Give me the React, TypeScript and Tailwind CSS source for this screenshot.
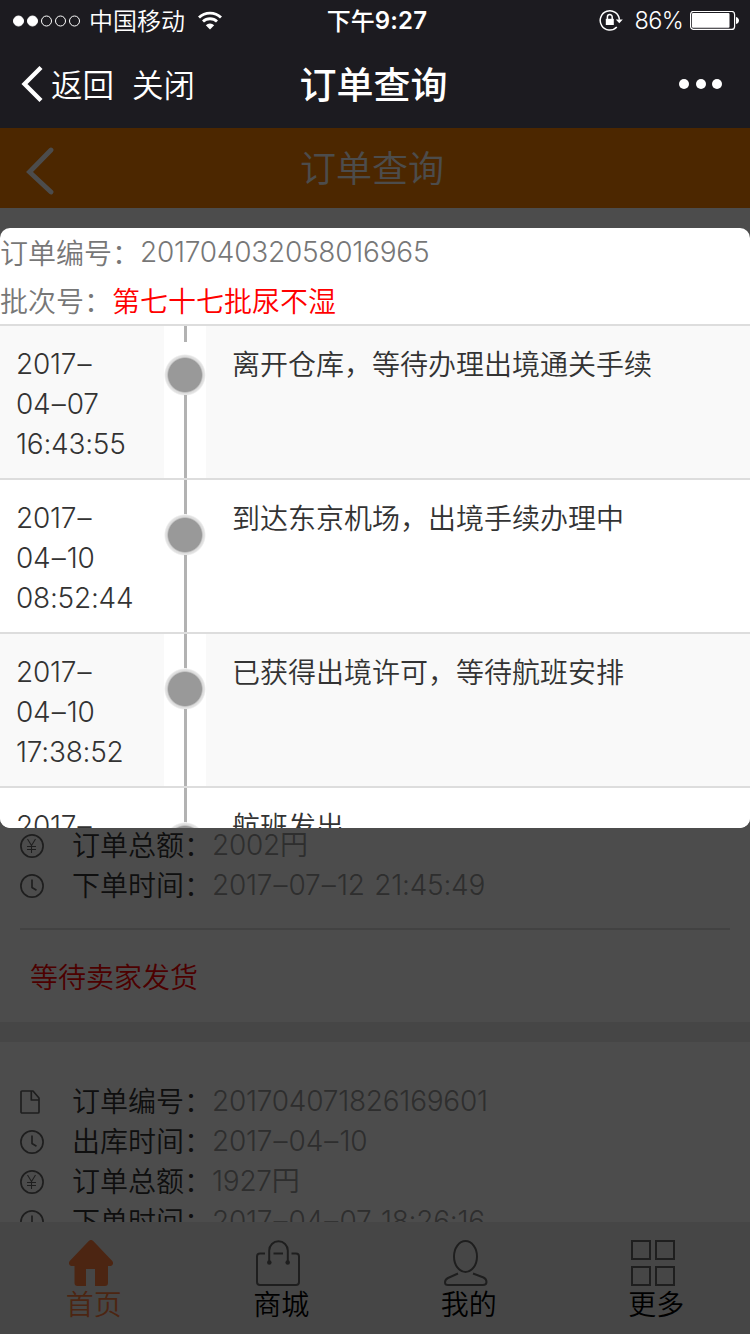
import { ReactNode } from 'react';
import clsx from 'clsx';

type IconName = 'file' | 'clock' | 'yen';

interface TrackEvent {
  date: string[];
  text: string;
}

interface OrderField {
  icon: IconName;
  label: string;
  value: string;
  unit?: string;
}

const trackEvents: TrackEvent[] = [
  { date: ['2017–', '04–07', '16:43:55'], text: '离开仓库，等待办理出境通关手续' },
  { date: ['2017–', '04–10', '08:52:44'], text: '到达东京机场，出境手续办理中' },
  { date: ['2017–', '04–10', '17:38:52'], text: '已获得出境许可，等待航班安排' },
  { date: ['2017–'], text: '航班发出' },
];

const firstOrder: OrderField[] = [
  { icon: 'yen', label: '订单总额：', value: '2002', unit: '円' },
  { icon: 'clock', label: '下单时间：', value: '2017–07–12 21:45:49' },
];

const secondOrder: OrderField[] = [
  { icon: 'file', label: '订单编号：', value: '201704071826169601' },
  { icon: 'clock', label: '出库时间：', value: '2017–04–10' },
  { icon: 'yen', label: '订单总额：', value: '1927', unit: '円' },
  { icon: 'clock', label: '下单时间：', value: '2017–04–07 18:26:16' },
];

// Latin digits, slightly tightened, with a little air around the dashes
function Num({ text, className }: { text: string; className?: string }) {
  return (
    <span className={clsx('font-[Inter,sans-serif] whitespace-pre [word-spacing:2px]', className ?? 'tracking-[-0.24px]')}>
      {text.split(/(–)/).map((part, index) =>
        part === '–' ? (
          <span key={index} className="px-[1.3px]">
            –
          </span>
        ) : (
          part
        )
      )}
    </span>
  );
}

function FieldIcon({ name }: { name: IconName }) {
  return (
    <svg className="h-6 w-6" viewBox="0 0 24 24" fill="none" stroke="#666" strokeWidth="1.7" strokeLinejoin="round">
      {name === 'file' && (
        <>
          <path d="M2 1h11l6 7v14a1 1 0 0 1-1 1H2a1 1 0 0 1-1-1V2a1 1 0 0 1 1-1z" />
          <path d="M11.3 1v9H19" />
        </>
      )}
      {name === 'clock' && (
        <>
          <circle cx="12" cy="12" r="11.1" />
          <path d="M12 5.500v8l4.500 2.800" />
        </>
      )}
      {name === 'yen' && (
        <>
          <circle cx="12" cy="12" r="11.1" />
          <path strokeWidth="1.1" d="M7.500 5l4 6.500 4-6.500M11.500 11.500V19M7 12.500h9M7 15.500h9" />
        </>
      )}
    </svg>
  );
}

function StatusBar() {
  return (
    <div className="flex h-10 items-center pr-[11px] pl-[13px]">
      <div className="flex flex-1 items-center">
        <svg className="mt-px h-3 w-[68px]" viewBox="0 0 68 12" fill="none" stroke="#fff">
          <circle cx="5.500" cy="6" r="5" fill="#fff" />
          <circle cx="19.500" cy="6" r="5" fill="#fff" />
          <circle cx="33.500" cy="6" r="5" />
          <circle cx="47.500" cy="6" r="5" />
          <circle cx="61.500" cy="6" r="5" />
        </svg>
        <span className="ml-2 text-[24px] leading-none">中国移动</span>
        <svg className="ml-[13px] h-[19px] w-6" viewBox="0 0 24 19" fill="none" stroke="#fff" strokeWidth="2.800">
          <path d="M1 6.600a15.600 15.600 0 0 1 22 0" />
          <path d="M5 10.600a10 10 0 0 1 14 0" />
          <path d="M12 18.600l-4.200-4.300a6 6 0 0 1 8.400 0z" fill="#fff" stroke="none" />
        </svg>
      </div>
      <div className="ml-[2px] flex items-center text-[24px] leading-none font-medium">
        下午
        <Num text="9:27" className="pt-px font-semibold tracking-[0.2px]" />
      </div>
      <div className="flex flex-1 items-center justify-end pt-[2px]">
        <svg className="mr-3 h-6 w-6" viewBox="0 0 24 24" fill="none" stroke="#fff" strokeWidth="1.500">
          <path d="M17.800 18a9.600 9.600 0 1 1 2.600-7.200" />
          <path d="M16.800 10.400h7l-3.500 3.800z" fill="#fff" stroke="none" />
          <rect x="6.800" y="9.800" width="8" height="6.200" fill="#fff" stroke="none" />
          <path d="M8.400 10V8a2.400 2.400 0 0 1 4.800 0v2" />
        </svg>
        <Num text="86%" className="text-[23.500px] leading-none tracking-[-0.7px]" />
        <svg className="ml-[7px] h-5 w-[49px]" viewBox="0 0 49 20" fill="none">
          <rect x="0.600" y="0.400" width="44" height="18" rx="3" stroke="#fff" strokeWidth="1.200" />
          <rect x="2" y="2" width="37.500" height="14.800" rx="1" fill="#fff" />
          <path d="M46 6c4 1 4 6 0 7z" fill="#fff" />
        </svg>
      </div>
    </div>
  );
}

function NavBar() {
  return (
    <div className="flex h-[88px] items-center pr-7 pl-[21px]">
      <div className="flex flex-1 items-center text-[31.500px] leading-none">
        <svg className="h-9 w-6" viewBox="0 0 24 36" fill="none" stroke="#fff" strokeWidth="4.300">
          <path d="M20 1.500L3.500 18 20 34.500" />
        </svg>
        <span className="ml-[6px]">返回</span>
        <span className="ml-[18px]">关闭</span>
      </div>
      <div className="ml-1 pb-[2px] text-[37px] leading-none font-medium">订单查询</div>
      <div className="flex flex-1 justify-end gap-[6.500px]">
        <i className="h-[10px] w-[10px] rounded-full bg-white" />
        <i className="h-[10px] w-[10px] rounded-full bg-white" />
        <i className="h-[10px] w-[10px] rounded-full bg-white" />
      </div>
    </div>
  );
}

function FieldRow({ field }: { field: OrderField }) {
  return (
    <div className="flex h-10 items-center pb-[2px] pl-5">
      <span className="mt-1 w-[52px]">
        <FieldIcon name={field.icon} />
      </span>
      <span className="text-[#333]">{field.label}</span>
      <span className="text-[#999]">
        <Num text={field.value} />
        {field.unit}
      </span>
    </div>
  );
}

function TabItem({ label, active, children }: { label: string; active?: boolean; children: ReactNode }) {
  return (
    <div className={clsx('flex flex-1 flex-col items-center pt-[18px]', active ? 'text-[#ff7e3e]' : 'text-black')}>
      <svg
        className={clsx('mr-[6px] h-[46px] w-11', active ? 'text-[#ff7e3e]' : 'text-[#666]')}
        viewBox="0 0 44 46"
        fill="none"
        stroke="currentColor"
        strokeWidth="2"
      >
        {children}
      </svg>
      <span className="mt-[3px] text-[28px] leading-7">{label}</span>
    </div>
  );
}

function TabBar() {
  return (
    <div className="flex h-28 shrink-0 bg-[#ebebeb]">
      <TabItem label="首页" active>
        <path
          d="M19.500 1.200a3.500 3.500 0 0 1 5 0L43.300 21c1.500 1.800.7 5-1.800 5H39v17a3 3 0 0 1-3 3H26V29h-9v17H8.500a3 3 0 0 1-3-3V26H2.500C0 26-.8 22.800.7 21z"
          fill="currentColor"
          stroke="none"
        />
      </TabItem>
      <TabItem label="商城">
        <path d="M9 13.500H4a3 3 0 0 0-3 3V42a3 3 0 0 0 3 3h36a3 3 0 0 0 3-3V16.500a3 3 0 0 0-3-3h-4.500M17.500 13.500H27" />
        <path d="M13.200 22V10.500a9.300 9.300 0 0 1 18.600 0V22" />
        <circle cx="13.300" cy="22.500" r="2.300" fill="currentColor" stroke="none" />
        <circle cx="31.700" cy="22.500" r="2.300" fill="currentColor" stroke="none" />
      </TabItem>
      <TabItem label="我的">
        <ellipse cx="21.500" cy="16.500" rx="11.500" ry="15.500" />
        <path d="M14 33.500L4 38c-2 1-3 2.500-3 4.500S2 45 4 45h35c2 0 3.500-.8 3.500-3s-1-3.500-3-4.500L29 33.500" />
      </TabItem>
      <TabItem label="更多">
        <rect x="1" y="1" width="18" height="18" />
        <rect x="25" y="1" width="18" height="18" />
        <rect x="1" y="27" width="18" height="18" />
        <rect x="25" y="27" width="18" height="18" />
      </TabItem>
    </div>
  );
}

function TrackRow({ event, first, shaded }: { event: TrackEvent; first: boolean; shaded: boolean }) {
  return (
    <div className={clsx('flex h-[154px] border-t-2 border-[#ddd] text-[#333]', shaded ? 'bg-[#f9f9f9]' : 'bg-white')}>
      <div className="w-[164px] py-4 pl-4">
        {event.date.map((part) => (
          <div key={part} className="h-10 leading-[40px]">
            <Num text={part} />
          </div>
        ))}
      </div>
      <div className="flex w-[42px] flex-col items-center bg-white">
        <i className={clsx('w-[3px] shrink-0 bg-[#b2b2b2]', first ? 'mb-[13px] h-4' : 'h-[35px]')} />
        <i className="-my-px h-[42px] w-[42px] shrink-0 rounded-full bg-[radial-gradient(circle,#999_16.500px,#dadada_18px,#e4e4e4_19.500px,#fff_21px)]" />
        <i className="w-[3px] flex-1 bg-[#b2b2b2]" />
      </div>
      <div className="flex-1 pt-4 pl-[26px] leading-[42px]">{event.text}</div>
    </div>
  );
}

export default function App() {
  return (
    <div className="flex h-[1334px] w-[750px] flex-col overflow-hidden bg-white font-['Noto_Sans_CJK_SC',sans-serif] text-[28px] font-[350]">
      <header className="h-32 shrink-0 bg-[#1c1b20] text-white">
        <StatusBar />
        <NavBar />
      </header>

      <div className="relative flex min-h-0 flex-1 flex-col">
        <div className="flex h-20 shrink-0 items-center bg-[#ff8200] pl-[26px] text-white">
          <svg className="mt-[5px] h-12 w-8" viewBox="0 0 32 48" fill="none" stroke="currentColor" strokeWidth="4.800" strokeLinecap="round">
            <path d="M25 3L3.500 25 25 45" />
          </svg>
          <div className="mr-[64px] flex-1 pb-[4px] text-center text-[36px] leading-none">订单查询</div>
        </div>

        <div className="flex min-h-0 flex-1 flex-col overflow-hidden">
          <div className="flex h-[814px] shrink-0 flex-col justify-end">
            {firstOrder.map((field) => (
              <FieldRow key={field.label} field={field} />
            ))}
            <div className="mx-5 mt-[23px] border-t-2 border-[#dcdcdc]" />
            <div className="h-[92px] pl-[30px] leading-[92px] text-[#f00]">等待卖家发货</div>
          </div>
          <div className="h-5 shrink-0 bg-[#ebebeb]" />
          <div className="shrink-0 pt-[39px]">
            {secondOrder.map((field) => (
              <FieldRow key={field.label} field={field} />
            ))}
          </div>
        </div>

        <TabBar />

        {/* Dimmed backdrop with the tracking dialog */}
        <div className="absolute inset-0 bg-black/70 pt-[100px]">
          <div className="h-[600px] overflow-hidden rounded-[10px] bg-white text-[#777]">
            <div className="flex h-12 items-center pb-px">
              订单编号：
              <Num text="201704032058016965" />
            </div>
            <div className="flex h-12 items-center pb-px">
              批次号：<span className="text-[#f00]">第七十七批尿不湿</span>
            </div>
            {trackEvents.map((event, index) => (
              <TrackRow key={event.text} event={event} first={index === 0} shaded={index % 2 === 0} />
            ))}
          </div>
        </div>
      </div>
    </div>
  );
}
